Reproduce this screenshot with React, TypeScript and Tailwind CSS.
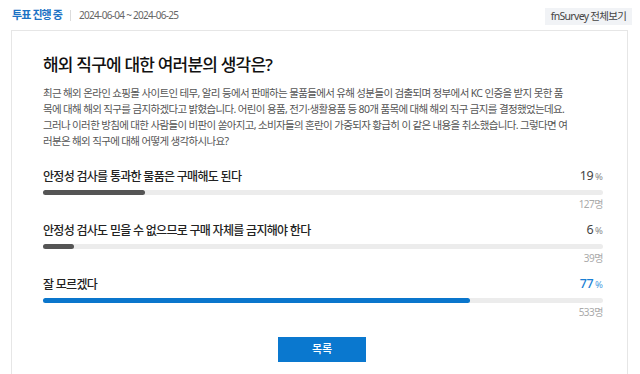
import React from "react";

const options = [
  { label: "안정성 검사를 통과한 물품은 구매해도 된다", pct: 19, count: 127, w: 18.2, top: false },
  { label: "안정성 검사도 믿을 수 없으므로 구매 자체를 금지해야 한다", pct: 6, count: 39, w: 5.6, top: false },
  { label: "잘 모르겠다", pct: 77, count: 533, w: 76.3, top: true },
];

export default function App() {
  return (
    <div className="w-[640px] h-[374px] overflow-hidden bg-white font-['Noto_Sans','Noto_Sans_CJK_KR',sans-serif] text-[#222]">
      <div className="h-[30px] flex items-center justify-between pl-[12px] pr-[8px]">
        <div className="flex items-center">
          <span className="text-[11px] font-bold text-[#1c72c4] tracking-[-0.9px]">투표 진행 중</span>
          <span className="mx-[8px] w-px h-[11px] bg-[#dcdcdc]" />
          <span className="text-[10px] text-[#666] tracking-[-0.7px]">2024-06-04 ~ 2024-06-25</span>
        </div>
        <div className="h-[17px] w-[87px] bg-[#f1f3f6] flex items-center justify-center text-[10.5px] text-[#444] tracking-[-0.7px] mb-[-3px]">
          fnSurvey 전체보기
        </div>
      </div>
      <div className="ml-[11px] mr-[12px] h-[400px] border border-b-0 border-[#e6e6e6] pl-[31px] pr-[24px] pt-[24px]">
        <h1 className="text-[17px] leading-[20px] font-medium text-[#111] tracking-[-0.8px] whitespace-nowrap">
          해외 직구에 대한 여러분의 생각은?
        </h1>
        <p className="mt-[10px] text-[10.5px] leading-[16px] text-[#555] tracking-[-0.65px] whitespace-nowrap">
          최근 해외 온라인 쇼핑몰 사이트인 테무, 알리 등에서 판매하는 물품들에서 유해 성분들이 검출되며 정부에서 KC 인증을 받지 못한 품
          <br />
          목에 대해 해외 직구를 금지하겠다고 밝혔습니다. 어린이 용품, 전기·생활용품 등 80개 품목에 대해 해외 직구 금지를 결정했었는데요.
          <br />
          그러나 이러한 방침에 대한 사람들이 비판이 쏟아지고, 소비자들의 혼란이 가중되자 황급히 이 같은 내용을 취소했습니다. 그렇다면 여
          <br />
          러분은 해외 직구에 대해 어떻게 생각하시나요?
        </p>
        <div className="mt-[19px] flex flex-col gap-[11px]">
          {options.map((o) => (
            <div key={o.label}>
              <div className="h-[18px] flex items-end justify-between">
                <span className="text-[12px] leading-[18px] font-medium text-[#222] tracking-[-0.7px] whitespace-nowrap">
                  {o.label}
                </span>
                <span className="leading-[18px] whitespace-nowrap">
                  <span className={o.top ? "text-[12.5px] font-medium text-[#1a7fd4] tracking-[-0.5px]" : "text-[12.5px] text-[#444] tracking-[-0.5px]"}>{o.pct}</span>
                  <span className={o.top ? "ml-[2px] text-[9.5px] text-[#4a9be0]" : "ml-[2px] text-[9.5px] text-[#888]"}>%</span>
                </span>
              </div>
              <div className="mt-[4px] h-[5px] rounded-full bg-[#ececec]">
                <div
                  className={o.top ? "h-full rounded-full bg-[#0a76cc]" : "h-full rounded-full bg-[#555]"}
                  style={{ width: `${o.w}%` }}
                />
              </div>
              <div className="mt-[2px] h-[14px] text-right text-[10px] leading-[14px] text-[#aaa] tracking-[-0.5px]">
                {o.count}명
              </div>
            </div>
          ))}
        </div>
        <div className="mt-[18px] flex justify-center pr-[2px]">
          <div className="w-[88px] h-[25px] bg-[#0a78cf] text-white text-[11px] font-medium flex items-center justify-center">
            목록
          </div>
        </div>
      </div>
    </div>
  );
}
